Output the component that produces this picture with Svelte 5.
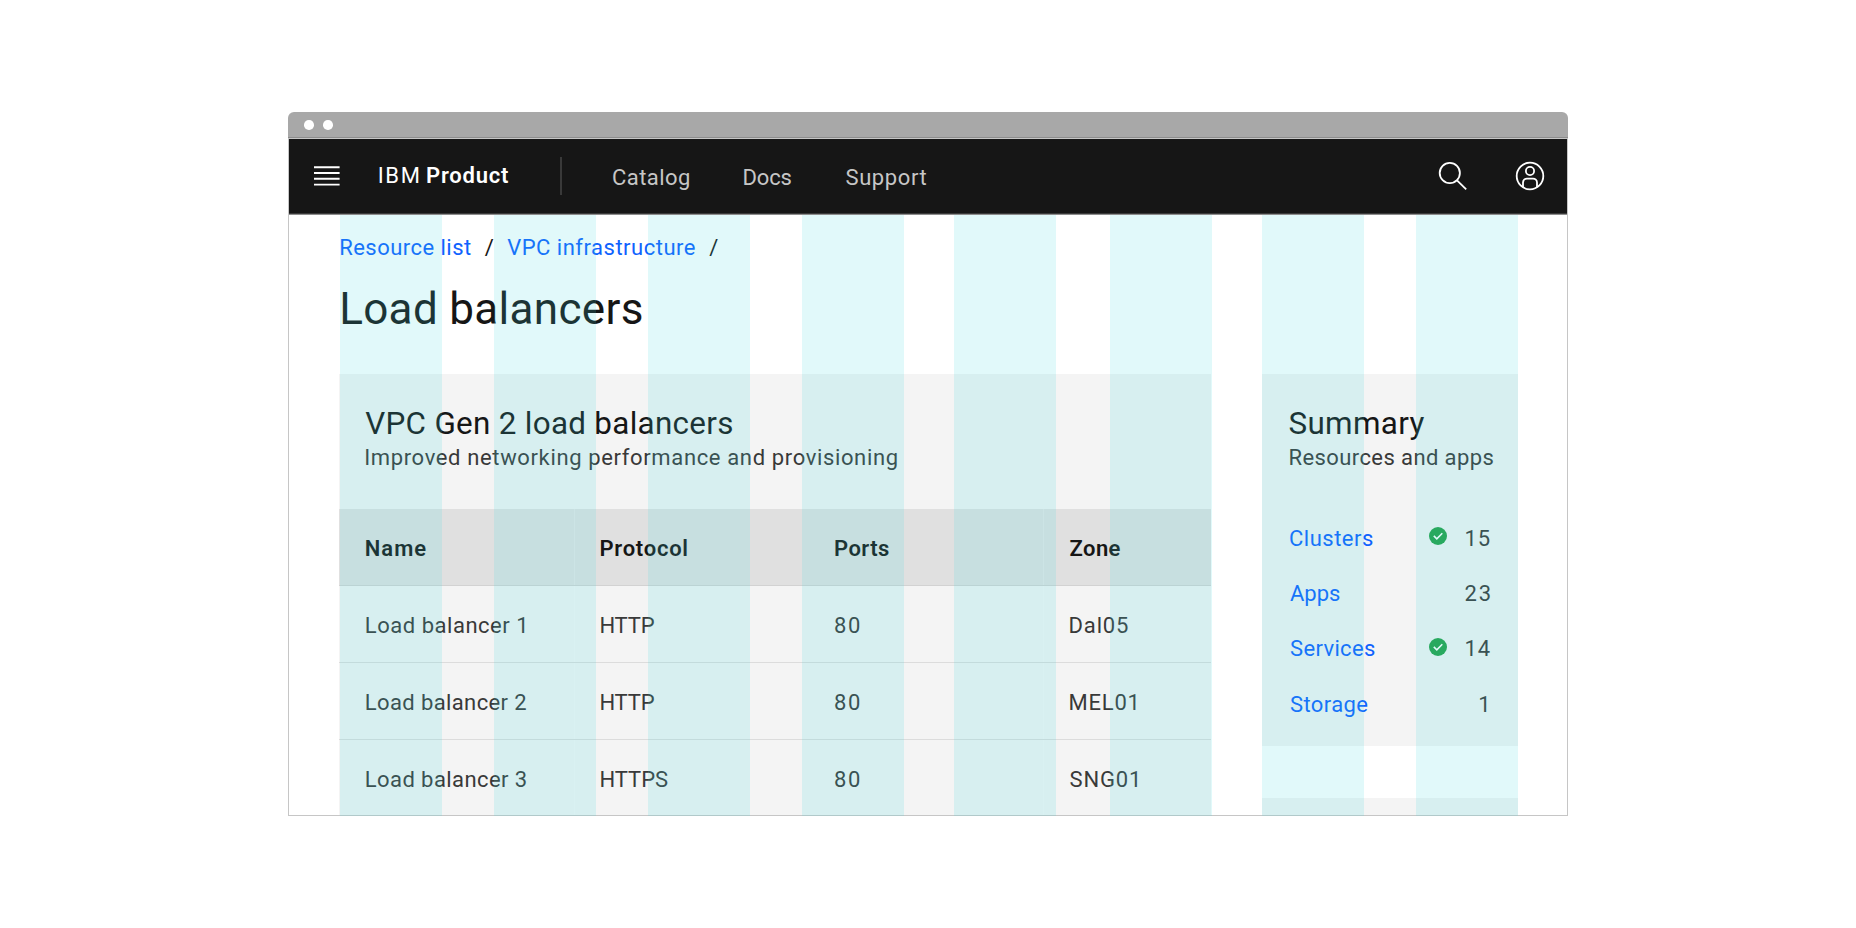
<script>
  const nav = [
    { label: 'Catalog', width: 76, gap: 54.5 },
    { label: 'Docs', width: 48, gap: 54 },
    { label: 'Support', width: 81, gap: 0 }
  ];

  const columns = [
    { label: 'Name', width: 60.5 },
    { label: 'Protocol', width: 87 },
    { label: 'Ports', width: 54 },
    { label: 'Zone', width: 51 }
  ];

  const rows = [
    [['Load balancer 1', 158.5], ['HTTP', 54.3], ['80', 25], ['Dal05', 58.5]],
    [['Load balancer 2', 160.5], ['HTTP', 54.3], ['80', 25], ['MEL01', 66]],
    [['Load balancer 3', 160], ['HTTPS', 67.7], ['80', 25], ['SNG01', 67.5]]
  ];

  const resources = [
    { label: 'Clusters', width: 83, count: '15', countWidth: 24.3, ok: true },
    { label: 'Apps', width: 50, count: '23', countWidth: 24.3, ok: false },
    { label: 'Services', width: 85, count: '14', countWidth: 24.3, ok: true },
    { label: 'Storage', width: 77.3, count: '1', countWidth: 10.5, ok: false }
  ];

  const pen = document.createElement('canvas').getContext('2d');

  // Tracks a label so that its drawn glyphs span the given width.
  function track(node, width) {
    const cs = getComputedStyle(node);
    pen.font = `${cs.fontWeight} ${cs.fontSize} ${cs.fontFamily}`;
    const text = node.textContent;
    const m = pen.measureText(text);
    const ink = m.actualBoundingBoxLeft + m.actualBoundingBoxRight;
    if (text.length > 1) {
      node.style.letterSpacing = `${(width - ink) / (text.length - 1)}px`;
    }
    node.style.marginLeft = `${m.actualBoundingBoxLeft}px`;
  }
</script>

{#snippet label(text, width)}<span class="label" use:track={width}>{text}</span>{/snippet}

<main class="stage">
  <div class="window">
    <div class="titlebar"><i></i><i></i></div>
    <div class="frame">
      <header>
        <svg class="menu" width="26" height="22" viewBox="0 0 26 22">
          <path d="M0 2.3H25.6M0 8H25.6M0 13.8H25.6M0 19.6H25.6" stroke="#fff" stroke-width="1.9" />
        </svg>
        <div class="brand">
          <div class="ibm">{@render label('IBM', 40)}</div>
          <strong>{@render label('Product', 81)}</strong>
        </div>
        <div class="rule"></div>
        <nav>
          {#each nav as item}
            <a style="width: {item.width + item.gap}px">{@render label(item.label, item.width)}</a>
          {/each}
        </nav>
        <svg class="search" width="32" height="32" viewBox="0 0 32 32">
          <g fill="none" stroke="#fff" stroke-width="1.8">
            <circle cx="12.8" cy="13" r="10.1" />
            <path d="M20 20.3 29.2 29.4" />
          </g>
        </svg>
        <svg class="user" width="32" height="32" viewBox="0 0 32 32">
          <g fill="none" stroke="#fff" stroke-width="1.8">
            <circle cx="16" cy="16" r="13.3" />
            <circle cx="16" cy="11" r="4.1" />
            <path d="M9 27V22.5A4 4 0 0 1 13 18.6H19A4 4 0 0 1 23 22.5V27" />
          </g>
        </svg>
      </header>

      <div class="content">
        <div class="crumbs">
          <a class="c1">{@render label('Resource list', 130.8)}</a>
          <span class="s1">{@render label('/', 7)}</span>
          <a class="c2">{@render label('VPC infrastructure', 187.6)}</a>
          <span>{@render label('/', 7)}</span>
        </div>
        <h1>{@render label('Load balancers', 299.5)}</h1>

        <div class="panels">
          <section class="card main">
            <div class="head">
              <h2>{@render label('VPC Gen 2 load balancers', 367)}</h2>
              <p>{@render label('Improved networking performance and provisioning', 531.5)}</p>
            </div>
            <div class="row th">
              {#each columns as c}
                <div class="cell">{@render label(c.label, c.width)}</div>
              {/each}
            </div>
            {#each rows as row}
              <div class="row">
                {#each row as [text, width]}
                  <div class="cell">{@render label(text, width)}</div>
                {/each}
              </div>
            {/each}
          </section>

          <aside>
            <section class="card summary">
              <div class="head">
                <h2>{@render label('Summary', 135)}</h2>
                <p>{@render label('Resources and apps', 204)}</p>
              </div>
              {#each resources as r}
                <div class="resource">
                  <a>{@render label(r.label, r.width)}</a>
                  {#if r.ok}
                    <svg width="18" height="18" viewBox="0 0 18 18">
                      <circle cx="9" cy="9" r="9" fill="#24a148" />
                      <path d="M4.8 8.9 7.8 11.8 13.3 6.3" fill="none" stroke="#fff" stroke-width="1.6" />
                    </svg>
                  {/if}
                  <div class="count" style="width: {r.countWidth}px">{@render label(r.count, r.countWidth)}</div>
                </div>
              {/each}
            </section>
            <section class="card next"></section>
          </aside>
        </div>
      </div>
    </div>
    <div class="grid">
      {#each Array(8) as _}<i></i>{/each}
    </div>
  </div>
</main>

<style>
  :global(body) { background: #fff; }
  .stage {
    box-sizing: border-box;
    height: 928px;
    padding: 112px 288px;
    overflow: hidden;
    font: 370 22px/32px Roboto, sans-serif;
    color: #393939;
  }
  .window { position: relative; width: 1280px; height: 704px; display: flex; flex-direction: column; }
  .label { display: inline-block; white-space: pre; }
  .titlebar {
    box-sizing: border-box;
    flex: none;
    height: 26px;
    padding: 8px 0 0 16px;
    display: flex;
    gap: 9.6px;
    background: #a8a8a8;
    border-bottom: 1px solid #8d8d8d;
    border-radius: 6px 6px 0 0;
  }
  .titlebar i { width: 9.6px; height: 9.6px; border-radius: 50%; background: #fff; }
  .frame {
    flex: 1;
    min-height: 0;
    display: flex;
    flex-direction: column;
    overflow: hidden;
    border: 1px solid #c6c6c6;
  }
  header {
    box-sizing: border-box;
    flex: none;
    height: 76px;
    display: flex;
    align-items: flex-start;
    background: #161616;
    border-bottom: 1px solid #8d8d8d;
    box-shadow: inset 0 -1px #393939;
  }
  .menu { margin: 26px 0 0 24.5px; }
  .brand { display: flex; margin: 20.5px 0 0 39.2px; width: 181px; color: #fff; }
  .ibm { width: 48.3px; }
  strong { font-weight: 600; }
  .rule { width: 2px; height: 38px; margin-top: 18px; background: #393939; }
  nav { display: flex; flex: 1; margin: 22.5px 0 0 51.3px; color: #c6c6c6; }
  .search { margin: 21px 44.6px 0 0; }
  .user { margin: 21px 21.4px 0 0; }
  .content { flex: 1; min-height: 0; padding: 16.5px 0 0 50.2px; }
  .crumbs { display: flex; padding-left: 1px; color: #161616; }
  .crumbs a, .resource a { color: #0f62fe; }
  .c1 { width: 144.5px; }
  .s1 { width: 22.5px; }
  .c2 { width: 202px; }
  h1, h2, p { margin: 0; font-weight: 370; }
  h1 { margin-top: 17.5px; padding-left: 3px; font-size: 44px; line-height: 56px; color: #161616; }
  h2 { font-size: 31.4px; line-height: 40px; color: #161616; }
  p { line-height: 28px; }
  .panels { display: flex; gap: 50.8px; margin-top: 37.4px; }
  .card { background: #f4f4f4; }
  .head { box-sizing: border-box; height: 135px; padding: 29.8px 0 0 26px; }
  .main { width: 872px; height: 460px; }
  .row {
    box-sizing: border-box;
    display: grid;
    grid-template-columns: repeat(4, 234.6px);
    height: 76.8px;
    border-bottom: 1px solid #dcdcdc;
    overflow: hidden;
  }
  .cell { padding-left: 26.6px; line-height: 79px; box-shadow: inset 1px 0 #ffffff30; }
  .cell:first-child, .cell:nth-child(3) { box-shadow: none; }
  .th { font-weight: 600; color: #161616; background: #e0e0e0; border-bottom-color: #d2d2d2; }
  .th .cell { line-height: 79.6px; }
  aside { width: 256px; }
  .summary { height: 372px; }
  .summary .head { height: 137px; padding-left: 27.5px; }
  .resource {
    display: flex;
    align-items: center;
    height: 55.2px;
    padding: 0 28.3px 0 28px;
  }
  .resource svg { margin: -5px 18.4px 0 auto; flex: none; }
  .resource a + .count { margin-left: auto; }
  .count { flex: none; }
  .next { height: 40px; margin-top: 52px; }
  /* Column guides laid over the page */
  .grid {
    position: absolute;
    left: 52px;
    top: 103px;
    bottom: 0;
    display: grid;
    grid-template-columns: 102px 102px 102px 102px 102px 102px 102px 102px;
    column-gap: 52px;
    pointer-events: none;
  }
  .grid i { background: rgba(61, 217, 223, 0.155); }
  .grid i:nth-child(5) { margin: 0 2px 0 -2px; }
  .grid i:nth-child(7), .grid i:nth-child(8) { margin: 0 2px 0 -2px; }
</style>
